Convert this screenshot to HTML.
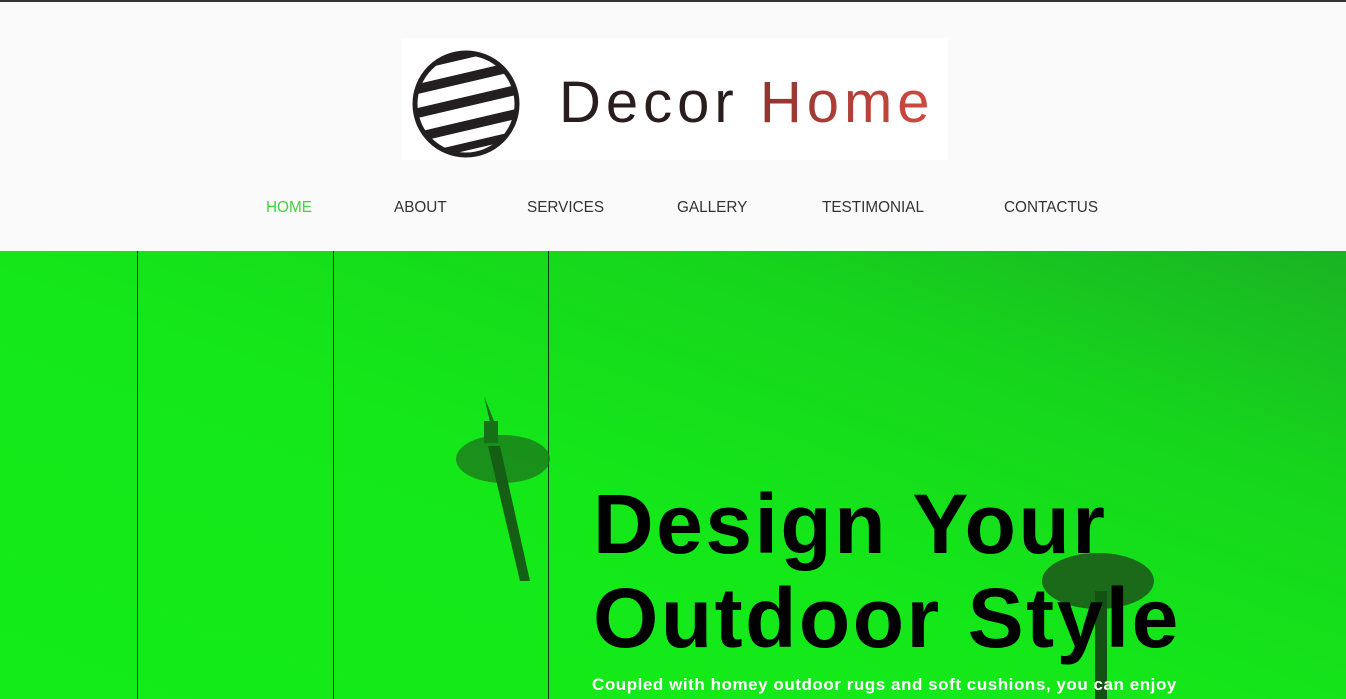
<!DOCTYPE html>
<html><head><style>
body{margin:0;width:1346px;height:699px;overflow:hidden;font-family:"Liberation Sans",sans-serif;}
.top{height:2px;background:#333;}
header{height:249px;background:#fafafa;position:relative;}
.logo{position:absolute;left:401px;top:36px;width:547px;height:122px;background:#fff;}
.logo .t{position:absolute;left:158px;top:36px;font-size:58px;letter-spacing:5px;color:#2a1d1d;line-height:1;}
nav a{position:absolute;top:197px;font-size:15.3px;color:#333;text-decoration:none;}
.hero{position:absolute;top:251px;left:0;width:1346px;height:448px;background:linear-gradient(200deg,#1ab323 0%,#16d51c 25%,#14e819 55%,#13ec18 100%);overflow:hidden;}
.line{position:absolute;top:0;width:1px;height:448px;background:#0a3a0a;}
h1{position:absolute;left:593px;top:226px;margin:0;font-size:84px;line-height:94px;font-weight:bold;color:#000;letter-spacing:2.5px;}
.sub{position:absolute;left:592px;top:424px;color:#fff;font-weight:bold;font-size:17px;letter-spacing:0.55px;}
</style></head><body>
<div class="top"></div>
<header>
<div class="logo">
<svg width="120" height="122" style="position:absolute;left:8px;top:4px" viewBox="0 0 120 122">
<defs><clipPath id="c"><circle cx="57" cy="62" r="51"/></clipPath></defs>
<g clip-path="url(#c)" fill="#231f20">
<rect x="0" y="0" width="120" height="122" fill="#fff"/>
<polygon points="0,24 120,-4 120,2 0,30"/>
<polygon points="0,44 120,16 120,26 0,54"/>
<polygon points="0,68 120,40 120,50 0,78"/>
<polygon points="0,92 120,64 120,74 0,102"/>
<polygon points="0,114 120,86 120,94 0,122"/>
</g>
<circle cx="57" cy="62" r="51" fill="none" stroke="#231f20" stroke-width="5"/>
</svg>
<div class="t">Decor <span style="background:linear-gradient(90deg,#8e3530,#d24a40);-webkit-background-clip:text;color:transparent">Home</span></div>
</div>
<nav>
<a style="left:266px;color:#3ed43e">HOME</a>
<a style="left:394px">ABOUT</a>
<a style="left:527px">SERVICES</a>
<a style="left:677px">GALLERY</a>
<a style="left:822px">TESTIMONIAL</a>
<a style="left:1004px">CONTACTUS</a>
</nav>
</header>
<div class="hero">
<div class="line" style="left:137px"></div>
<div class="line" style="left:333px"></div>
<div class="line" style="left:548px"></div>
<svg width="1346" height="448" style="position:absolute;left:0;top:0">
<ellipse cx="503" cy="208" rx="47" ry="24" fill="#1a7a1a" opacity=".8"/>
<polygon points="488,195 500,195 530,330 520,330" fill="#145f14"/>
<polygon points="484,145 492,180 498,180" fill="#167016"/>
<rect x="484" y="170" width="14" height="22" fill="#167016"/>
<ellipse cx="1098" cy="330" rx="56" ry="28" fill="#1a6a1a"/>
<rect x="1095" y="340" width="12" height="108" fill="#145214"/>
</svg>
<h1>Design Your<br>Outdoor Style</h1>
<div class="sub">Coupled with homey outdoor rugs and soft cushions, you can enjoy</div>
</div>
</body></html>
